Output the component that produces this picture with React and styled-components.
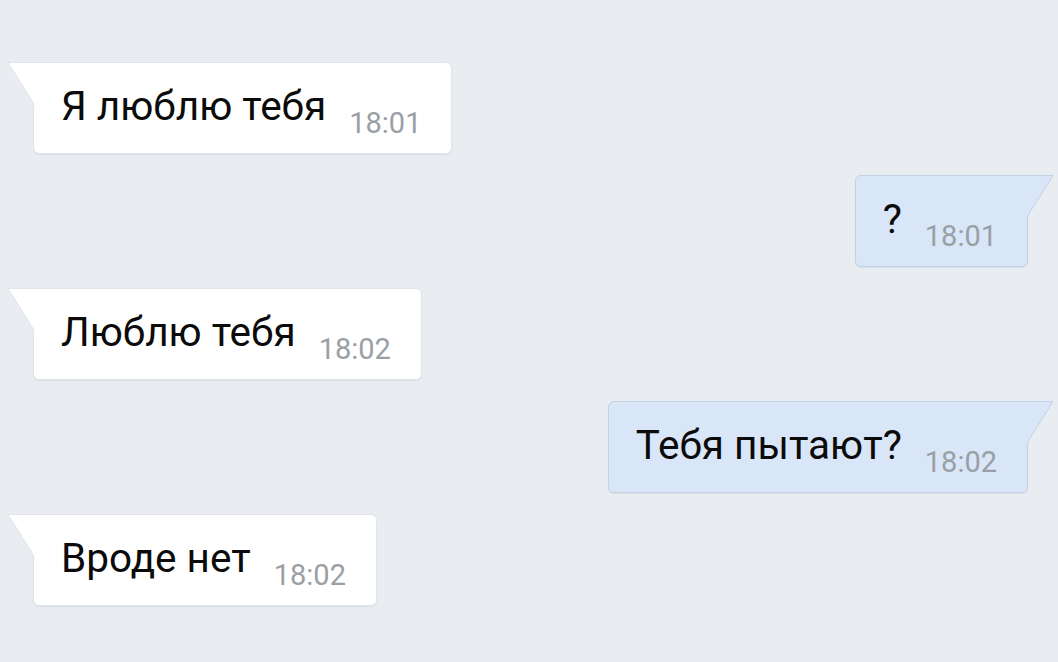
import React from "react";
import styled, { createGlobalStyle } from "styled-components";

const GlobalStyle = createGlobalStyle`
  html, body {
    margin: 0;
    padding: 0;
    background: #e9edf2;
  }

  body {
    font-family: Roboto, "Noto Sans", sans-serif;
  }
`;

const Chat = styled.div`
  width: 1058px;
  height: 662px;
  box-sizing: border-box;
  padding: 62px 30px 0 33px;
  display: flex;
  flex-direction: column;
  gap: 21px;
  background: #e9edf2;
  overflow: hidden;
`;

const Bubble = styled.div`
  position: relative;
  align-self: ${(props) => (props.out ? "flex-end" : "flex-start")};
  height: 92px;
  box-sizing: border-box;
  display: flex;
  align-items: flex-end;
  padding: 0 30px 15px 27px;
  background: ${(props) => (props.out ? "#d9e6f7" : "#ffffff")};
  border: 1px solid ${(props) => (props.out ? "#c3d1e4" : "#e1e5ea")};
  border-radius: ${(props) => (props.out ? "6px 0 6px 6px" : "0 6px 6px 6px")};
  box-shadow: 0 1px 1px rgba(40, 60, 90, 0.08);
`;

const Tail = styled.svg`
  position: absolute;
  top: -1px;
  width: 28px;
  height: 46px;
  left: ${(props) => (props.out ? "auto" : "-27px")};
  right: ${(props) => (props.out ? "-27px" : "auto")};
  transform: ${(props) => (props.out ? "scaleX(-1)" : "none")};
`;

const Text = styled.span`
  font-size: 40.5px;
  line-height: 1;
  color: #0b0b0b;
  margin-bottom: 12px;
  white-space: nowrap;
`;

const Time = styled.span`
  font-size: 29px;
  line-height: 1;
  color: #9a9fa6;
  margin-left: 23px;
  white-space: nowrap;
`;

const messages = [
  { text: "Я люблю тебя", time: "18:01" },
  { text: "?", time: "18:01", out: true },
  { text: "Люблю тебя", time: "18:02" },
  { text: "Тебя пытают?", time: "18:02", out: true },
  { text: "Вроде нет", time: "18:02" },
];

const BubbleTail = ({ out }) => {
  const fill = out ? "#d9e6f7" : "#ffffff";
  const stroke = out ? "#c3d1e4" : "#e1e5ea";
  return (
    <Tail out={out ? 1 : 0} viewBox="0 0 28 46">
      <path d="M1 0.5 L28 0.5 L28 46 L27 46 Q27 41 24 37 Z" fill={fill} />
      <path
        d="M28 0.5 L1 0.5 L24 37 Q27 41 27 46"
        fill="none"
        stroke={stroke}
        strokeWidth="1"
      />
    </Tail>
  );
};

const App = () => {
  return (
    <>
      <GlobalStyle />
      <Chat>
        {messages.map((m, i) => (
          <Bubble key={i} out={m.out ? 1 : 0}>
            <BubbleTail out={m.out} />
            <Text>{m.text}</Text>
            <Time>{m.time}</Time>
          </Bubble>
        ))}
      </Chat>
    </>
  );
};

export default App;
